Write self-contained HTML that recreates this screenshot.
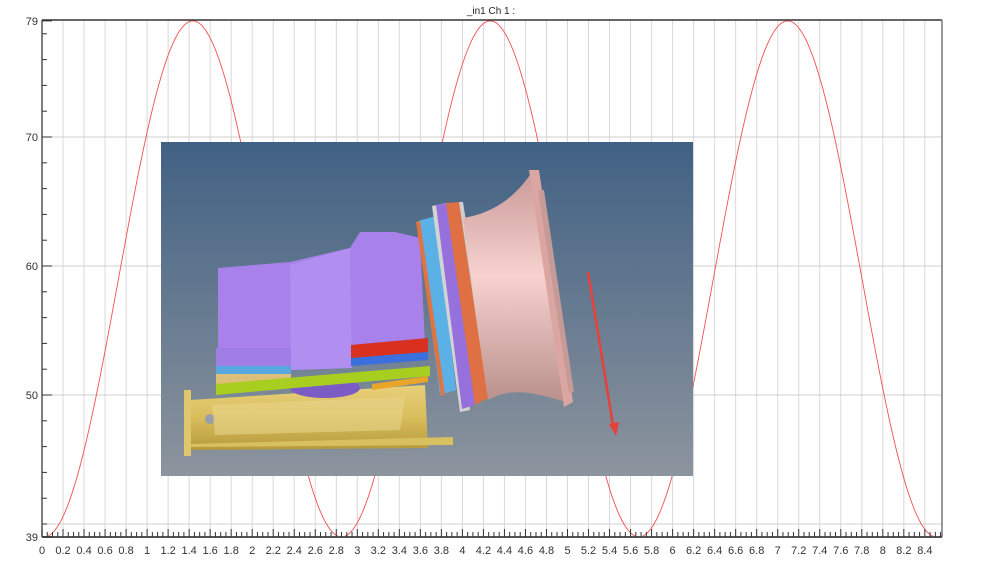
<!DOCTYPE html>
<html><head><meta charset="utf-8"><style>
html,body{margin:0;padding:0;background:#fff;width:982px;height:576px;overflow:hidden}
svg{display:block;font-family:"Liberation Sans",sans-serif}
</style></head><body>
<svg id="s" width="982" height="576" xmlns="http://www.w3.org/2000/svg">
<defs>
<linearGradient id="bg" x1="0" y1="0" x2="0" y2="1"><stop offset="0" stop-color="#416184"/><stop offset="1" stop-color="#8c949d"/></linearGradient>
<linearGradient id="pk" x1="0" y1="0" x2="0" y2="1"><stop offset="0" stop-color="#c99a98"/><stop offset="0.45" stop-color="#f7d2cf"/><stop offset="1" stop-color="#b9908c"/></linearGradient>
<linearGradient id="yl" x1="0" y1="0" x2="0" y2="1"><stop offset="0" stop-color="#e8cf7a"/><stop offset="0.5" stop-color="#d9bd5c"/><stop offset="1" stop-color="#b59a3c"/></linearGradient>
</defs>
<g id="grid"></g>
<g id="curve"></g>
<text x="491" y="14" font-size="10" text-anchor="middle" fill="#222">_in1  Ch 1 :</text>
<g id="img">
<rect x="161" y="142" width="532" height="334" fill="url(#bg)"/>
<polygon points="190,400 425,385 428,448 190,450" fill="url(#yl)"/>
<polygon points="190,444 453,437 453,445 190,447" fill="#d8bf60"/>
<rect x="184" y="390" width="7" height="66" fill="#e0c76e"/>
<circle cx="210" cy="419" r="5" fill="#9a9ea8"/>
<polygon points="212,405 405,397 400,430 215,435" fill="#e8d38a" opacity="0.6"/>
<polygon points="218,268 290,262 350,248 360,232 395,232 420,238 425,345 352,350 352,368 291,370 291,350 218,350" fill="#a882ea"/>
<polygon points="290,265 350,248 352,368 291,370" fill="#b494f2" opacity="0.7"/>
<ellipse cx="325" cy="388" rx="35" ry="10" fill="#7b5cc4"/>
<rect x="216" y="348" width="75" height="18" fill="#a07ee6"/>
<rect x="216" y="366" width="75" height="8" fill="#5aa8e0"/>
<rect x="216" y="374" width="75" height="10" fill="#dcc07a"/>
<polygon points="216,384 430,366 430,376 216,395" fill="#a8cf1f"/>
<polygon points="351,345 428,338 428,352 351,358" fill="#d8311f"/>
<polygon points="351,358 428,352 428,360 351,366" fill="#3a6fdd"/>
<polygon points="372,384 428,376 428,382 372,390" fill="#e8a52a"/>
<polygon points="418,221 436,216 456,390 440,395 420,240" fill="#5bb0e6"/>
<polygon points="416,222 420,221 445,395 441,396" fill="#e0733f"/>
<polygon points="432,206 446,203 470,410 460,412" fill="#d4d4d4"/>
<polygon points="436,205 448,203 475,405 462,409" fill="#9670dc"/>
<polygon points="446,203 460,202 488,398 475,405" fill="#de7044"/>
<polygon points="459,202 463,202 493,395 488,398" fill="#cfcfcf"/>
<path d="M463,218 C500,212 520,190 532,172 L566,402 C540,395 515,385 488,400 Z" fill="url(#pk)"/>
<polygon points="529,170 539,170 573,402 564,407" fill="#dba6a2"/>
<polygon points="538,190 544,190 574,392 569,393" fill="#c69a96"/>
<line x1="588" y1="272" x2="613" y2="425" stroke="#e8403a" stroke-width="2.5"/>
<polygon points="609,424 619,422 616,436" fill="#e8403a"/>
</g>
<g id="fg"></g>
</svg>
<script>
var NS="http://www.w3.org/2000/svg";
function el(p,t,a){var e=document.createElementNS(NS,t);for(var k in a)e.setAttribute(k,a[k]);p.appendChild(e);return e;}
var g=document.getElementById('grid'),f=document.getElementById('fg'),c=document.getElementById('curve');
var X0=42,SX=105.1,XR=942,YT=20,YB=537;
function Y(v){return 266-(v-60)*12.9;}
for(var i=1;i<=42;i++){var x=X0+i*SX*0.2;el(g,'line',{x1:x,y1:YT,x2:x,y2:YB,stroke:'#d8d8d8','stroke-width':1});}
[40,50,60,70].forEach(function(v){el(g,'line',{x1:X0,y1:Y(v),x2:XR,y2:Y(v),stroke:'#cfcfcf','stroke-width':1});});
var d='';for(var px=X0;px<=XR;px+=1){var xv=(px-X0)/SX;var v=59-20*Math.cos(2*Math.PI*(xv-0.02)/2.83);d+=(px==X0?'M':'L')+px+','+Y(v).toFixed(1);}
el(c,'path',{d:d,fill:'none',stroke:'#f05050','stroke-width':0.9});
el(f,'line',{x1:X0,y1:YT,x2:XR,y2:YT,stroke:'#333','stroke-width':1.5});
el(f,'line',{x1:X0,y1:YT,x2:X0,y2:YB,stroke:'#555','stroke-width':1.5});
el(f,'line',{x1:XR,y1:YT,x2:XR,y2:YB,stroke:'#777','stroke-width':1.5});
el(f,'line',{x1:X0,y1:YB,x2:XR,y2:YB,stroke:'#555','stroke-width':2});
for(var v=40;v<=78;v+=2){el(f,'line',{x1:X0,y1:Y(v),x2:X0+5,y2:Y(v),stroke:'#333','stroke-width':1});}
[[79,'79'],[70,'70'],[60,'60'],[50,'50'],[39,'39']].forEach(function(a){var y=Y(a[0]);el(f,'line',{x1:X0,y1:y,x2:X0+10,y2:y,stroke:'#333','stroke-width':1});var t=el(f,'text',{x:X0-4,y:y+4,'font-size':11,'text-anchor':'end',fill:'#333'});t.textContent=a[1];});
for(var i=0;i<=171;i++){var x=X0+i*SX*0.05;if(x>XR)break;var maj=i%4==0;el(f,'line',{x1:x,y1:YB,x2:x,y2:YB-(maj?8:5),stroke:'#333','stroke-width':1});}
for(var i=0;i<=42;i++){var x=X0+i*SX*0.2;var v=Math.round(i*2)/10;var t=el(f,'text',{x:x,y:YB+17,'font-size':11,'text-anchor':'middle',fill:'#333'});t.textContent=String(v);}
</script>
</body></html>
